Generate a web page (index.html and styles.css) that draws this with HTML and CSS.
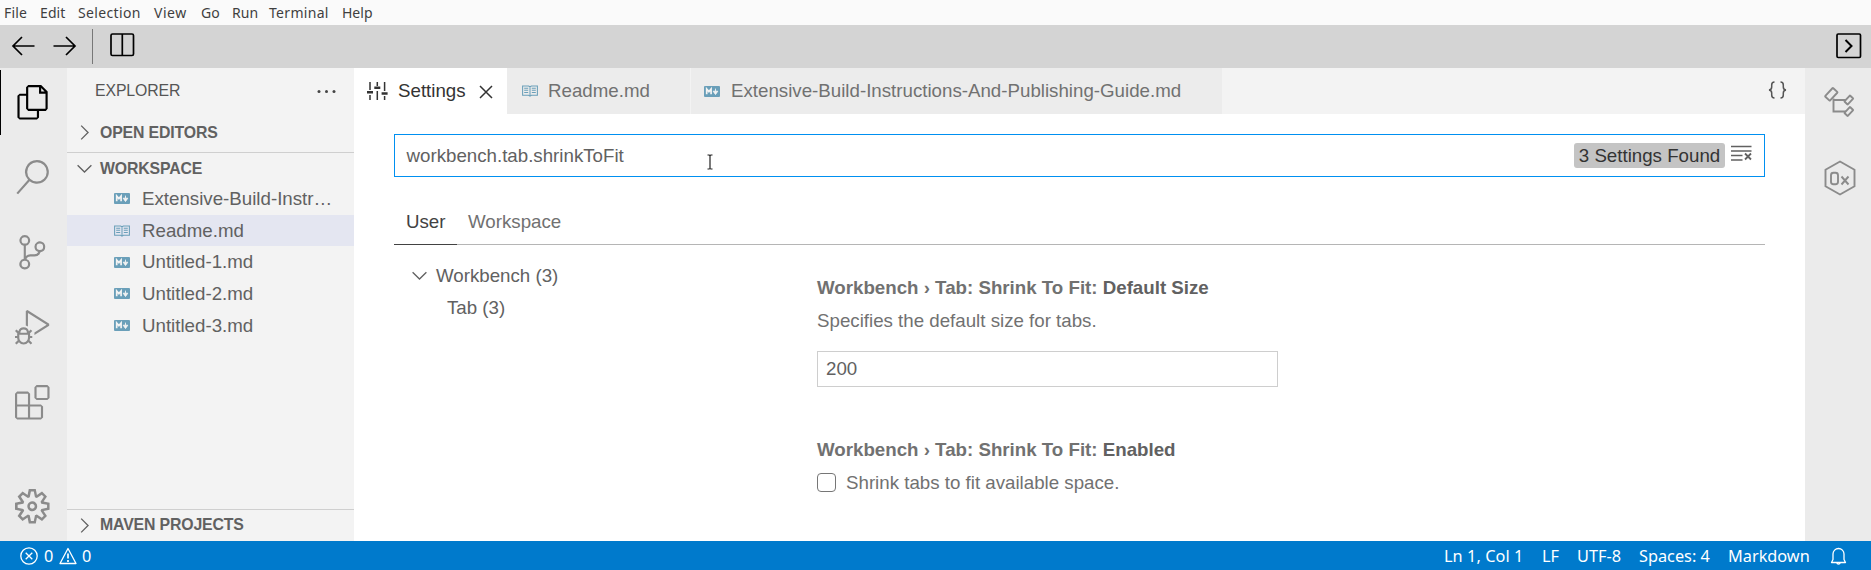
FILE: index.html
```html
<!DOCTYPE html>
<html lang="en">
<head>
<meta charset="utf-8">
<title>Settings</title>
<link rel="stylesheet" href="styles.css">
</head>
<body>
<svg class="defs" width="0" height="0">
  <symbol id="md" viewBox="0 0 16 11"><rect width="16" height="11" rx="1"/><path d="M2.7 8.3V3l2.2 2.6L7.1 3v5.3" fill="none" stroke="#f3f3f3" stroke-width="1.7"/><path d="M11.5 2.6v3M9.2 5.2h4.6l-2.3 3.3z" fill="#f3f3f3" stroke="#f3f3f3" stroke-width=".9"/></symbol>
  <symbol id="book" viewBox="0 0 16 12"><path d="M.6 1h6L8 1.8 9.4 1h6v9.3h-6L8 11.2l-1.400-.9h-6zM8 1.800V11M2.200 3.300h4M2.200 5.300h4M2.200 7.500h4M9.800 3.300h4M9.800 5.300h4M9.800 7.500h4" fill="none" stroke="#6a9fb9" stroke-width="1.050"/></symbol>
  <symbol id="right" viewBox="0 0 16 16"><path d="M5.200 2.200 11 8l-5.800 5.800" fill="none" stroke="currentColor" stroke-width="1.1"/></symbol>
  <symbol id="down" viewBox="0 0 16 16"><path d="M2.200 5.200 8 11l5.800-5.800" fill="none" stroke="currentColor" stroke-width="1.1"/></symbol>
</svg>
<div class="window">
  <nav class="menubar">
    <span class="m-file">File</span><span class="m-edit">Edit</span><span class="m-selection">Selection</span><span class="m-view">View</span><span class="m-go">Go</span><span class="m-run">Run</span><span class="m-terminal">Terminal</span><span class="m-help">Help</span>
  </nav>
  <div class="toolbar">
    <svg class="arrow" width="24" height="20" viewBox="0 0 24 20"><path d="M23.500 10H2M11 1 2 10l9 9"/></svg>
    <svg class="arrow forward" width="24" height="20" viewBox="0 0 24 20"><path d="M.5 10h22M13 1l9 9-9 9"/></svg>
    <i class="divider"></i>
    <svg class="split" width="25" height="24" viewBox="0 0 25 24"><rect x="1" y="1" width="22.500" height="21.500" rx="1.500"/><path d="M12.300 1v21.500"/></svg>
    <svg class="panel-toggle" width="26" height="26" viewBox="0 0 26 26"><rect x="1" y="1" width="23.500" height="23.500" rx="1.200"/><path d="m9.500 7 6 6-6 6" stroke-width="2"/></svg>
  </div>
  <div class="workbench">
    <aside class="activity">
      <div class="act active"><svg viewBox="0 0 24 24"><path d="M17.5 0h-9L7 1.5V6H2.5L1 7.5v15.07L2.5 24h12.07L16 22.57V18h4.7l1.3-1.43V4.5L17.5 0zm0 2.120l2.380 2.380H17.500V2.120zm-3 20.380h-12v-15H7v9.070L8.500 18h6v4.500zm6-6h-12v-15H16V6h4.500v10.500z"/></svg></div>
      <div class="act"><svg viewBox="0 0 24 24"><path d="M15.250 0a8.250 8.250 0 0 0-6.180 13.720L1 22.880l1.120 1 8.050-9.120A8.251 8.251 0 1 0 15.250.01V0zm0 15a6.750 6.750 0 1 1 0-13.500 6.750 6.750 0 0 1 0 13.500z"/></svg></div>
      <div class="act"><svg viewBox="0 0 24 24"><path d="M21.007 8.222A3.738 3.738 0 0 0 15.045 5.200a3.737 3.737 0 0 0 1.156 6.583 2.988 2.988 0 0 1-2.668 1.670h-2.990a4.456 4.456 0 0 0-2.989 1.165V7.400a3.737 3.737 0 1 0-1.494 0v9.117a3.776 3.776 0 1 0 1.816.099 2.990 2.990 0 0 1 2.668-1.667h2.990a4.484 4.484 0 0 0 4.223-3.039 3.736 3.736 0 0 0 3.250-3.687zM4.565 3.738a2.242 2.242 0 1 1 4.484 0 2.242 2.242 0 0 1-4.484 0zm4.484 16.441a2.242 2.242 0 1 1-4.484 0 2.242 2.242 0 0 1 4.484 0zm8.221-9.715a2.242 2.242 0 1 1 0-4.485 2.242 2.242 0 0 1 0 4.485z"/></svg></div>
      <div class="act"><svg viewBox="0 0 24 24"><path d="M10.940 13.500l-1.320 1.320a3.730 3.730 0 0 0-7.240 0L1.060 13.500 0 14.560l1.720 1.720-.22.22V18H0v1.500h1.500v.08c.077.489.214.966.41 1.420L0 22.940 1.060 24l1.650-1.650A4.308 4.308 0 0 0 6 24a4.310 4.310 0 0 0 3.290-1.650L10.940 24 12 22.940 10.090 21c.198-.464.336-.951.41-1.450v-.1H12V18h-1.500v-1.500l-.22-.22L12 14.560l-1.060-1.060zM6 13.500a2.250 2.250 0 0 1 2.250 2.250h-4.500A2.250 2.250 0 0 1 6 13.500zm3 6a3.330 3.330 0 0 1-3 3 3.330 3.330 0 0 1-3-3v-2.250h6v2.250zm14.760-9.900v1.260L13.500 17.370V15.600l8.500-5.370L9 2v9.460a5.070 5.070 0 0 0-1.500-.72V.63L8.640 0l15.120 9.600z"/></svg></div>
      <div class="act"><svg viewBox="0 0 24 24"><path d="M13.500 1.500L15 0h7.500L24 1.500V9l-1.500 1.500H15L13.500 9V1.500zm1.500 0V9h7.500V1.500H15zM0 15V6l1.500-1.500H9L10.500 6v7.500H18l1.500 1.500v7.500L18 24H1.500L0 22.500V15zm9-1.500V6H1.500v7.500H9zM9 15H1.500v7.500H9V15zm1.500 7.500H18V15h-7.500v7.500z"/></svg></div>
      <div class="act gear"><svg viewBox="0 0 24 24"><path d="M19.850 8.750l4.150.83v4.840l-4.150.83 2.350 3.520-3.430 3.430-3.520-2.350-.83 4.150H9.580l-.83-4.150-3.520 2.350-3.430-3.430 2.350-3.520L0 14.420V9.580l4.150-.83L1.800 5.230 5.230 1.800l3.520 2.350L9.580 0h4.840l.83 4.150 3.520-2.350 3.430 3.430-2.350 3.520zm-1.570 5.070l4-.81v-2l-4-.81-.54-1.300 2.290-3.430-1.430-1.430-3.430 2.290-1.300-.54-.81-4h-2l-.81 4-1.300.54-3.430-2.290-1.430 1.430L6.380 8.900l-.54 1.300-4 .81v2l4 .81.54 1.300-2.290 3.430 1.430 1.430 3.430-2.290 1.300.54.81 4h2l.81-4 1.300-.54 3.430 2.290 1.430-1.430-2.290-3.430.54-1.300zm-8.186-4.672A3.430 3.430 0 0 1 12 8.570 3.440 3.440 0 0 1 15.430 12a3.430 3.430 0 1 1-5.336-2.852zm.956 4.274c.281.188.612.288.95.288A1.700 1.700 0 0 0 13.710 12a1.710 1.710 0 1 0-2.660 1.422z"/></svg></div>
    </aside>

    <aside class="sidebar">
      <header class="side-title"><span>EXPLORER</span><svg width="19" height="5" viewBox="0 0 19 5"><circle cx="2" cy="2.500" r="1.500"/><circle cx="9.500" cy="2.500" r="1.500"/><circle cx="17" cy="2.500" r="1.500"/></svg></header>
      <div class="section open-editors"><svg class="chev"><use href="#right"/></svg><span>OPEN EDITORS</span></div>
      <div class="section ruled"><svg class="chev"><use href="#down"/></svg><span>WORKSPACE</span></div>
      <div class="file"><svg class="md"><use href="#md"/></svg><span>Extensive-Build-Instr…</span></div>
      <div class="file selected"><svg class="book"><use href="#book"/></svg><span>Readme.md</span></div>
      <div class="file"><svg class="md"><use href="#md"/></svg><span>Untitled-1.md</span></div>
      <div class="file"><svg class="md"><use href="#md"/></svg><span>Untitled-2.md</span></div>
      <div class="file"><svg class="md"><use href="#md"/></svg><span>Untitled-3.md</span></div>
      <div class="section ruled maven"><svg class="chev"><use href="#right"/></svg><span>MAVEN PROJECTS</span></div>
    </aside>

    <main class="editor">
      <div class="tabs">
        <div class="tab t-settings"><svg class="sliders" width="21" height="18" viewBox="0 0 21 18"><path d="M3 0v8M3 13v5M10.300 0v4M10.300 9v9M17.600 0v9M17.600 14v4" stroke-width="1.500"/><path d="M0 10.300h6M7.300 5.800h6M14.600 11.500h6" stroke-width="2.400"/></svg><span>Settings</span><svg class="close" width="14" height="14" viewBox="0 0 14 14"><path d="m1 1 12 12M13 1 1 13"/></svg></div>
        <div class="tab t-readme"><svg class="book"><use href="#book"/></svg><span>Readme.md</span></div>
        <div class="tab t-guide"><svg class="md"><use href="#md"/></svg><span>Extensive-Build-Instructions-And-Publishing-Guide.md</span></div>
        <svg class="json" width="19" height="18" viewBox="0 0 19 18"><path d="M6.500 1C4 1 3.700 2 3.700 4v2c0 2-.7 2.800-2.700 3 2 .2 2.700 1 2.700 3v2c0 2 .3 3 2.800 3M12.500 1C15 1 15.300 2 15.300 4v2c0 2 .7 2.800 2.700 3-2 .2-2.700 1-2.700 3v2c0 2-.3 3-2.800 3"/></svg>
      </div>
      <div class="settings">
        <div class="search"><span class="query">workbench.tab.shrinkToFit</span><span class="count">3 Settings Found</span><svg class="clear" width="21" height="16" viewBox="0 0 21 16"><path d="M0 1.500h20.500M0 6h20.500M0 10.500h11.500M0 15h11.500" stroke-width="1.400"/><path d="m14 8.500 6 6M20 8.500l-6 6" stroke-width="1.800"/></svg>
          <svg class="ibeam" width="10" height="18" viewBox="0 0 10 18"><path d="M2.500 2H4l1 .6L6 2h1.500M5 2.600v12.800M2.500 16H4l1-.6 1 .6h1.500"/></svg>
        </div>
        <div class="scopes"><span class="scope current">User</span><span class="scope">Workspace</span></div>
        <div class="body">
          <div class="tree">
            <div class="branch"><svg class="chev"><use href="#down"/></svg><span>Workbench (3)</span></div>
            <div class="leaf">Tab (3)</div>
          </div>
          <div class="items">
            <h2>Workbench › Tab: Shrink To Fit: <b>Default Size</b></h2>
            <p>Specifies the default size for tabs.</p>
            <div class="number">200</div>
            <h2 class="second">Workbench › Tab: Shrink To Fit: <b>Enabled</b></h2>
            <div class="check"><i class="box"></i><p>Shrink tabs to fit available space.</p></div>
          </div>
        </div>
      </div>
    </main>

    <aside class="rightbar">
      <svg class="hierarchy" width="32" height="32" viewBox="0 0 32 32"><rect x="-5.800" y="-3.300" width="11.600" height="6.600" rx=".6" transform="translate(8.300 8.300) rotate(-47)"/><rect x="-4.100" y="-2.300" width="8.200" height="4.600" rx=".5" transform="translate(25.800 14) rotate(-47)"/><rect x="-4.100" y="-2.300" width="8.200" height="4.600" rx=".5" transform="translate(25.800 25.500) rotate(-47)"/><path d="M10.500 12.500v13h12.500M10.500 14h12.500"/></svg>
      <svg class="hex" width="34" height="36" viewBox="0 0 34 36"><path d="M17 1.500 31.500 9.800v16.400L17 34.500 2.500 26.200V9.800z"/><rect x="8" y="12.700" width="7" height="11.600" rx="2.500"/><path d="m18.500 16.500 7 8M25.500 16.500l-7 8"/></svg>
    </aside>
  </div>

  <footer class="status">
    <svg class="err" width="18" height="18" viewBox="0 0 18 18"><circle cx="9" cy="9" r="8.200"/><path d="m5.700 5.700 6.600 6.600M12.300 5.700l-6.600 6.600"/></svg><span class="s-err">0</span>
    <svg class="warn" width="18" height="18" viewBox="0 0 18 18"><path d="M9 1.500 17 16.500H1z" stroke-linejoin="round"/><path d="M9 6.500v5M9 13v2" stroke-width="1.700"/></svg><span class="s-warn">0</span>
    <span class="s-pos">Ln 1, Col 1</span><span class="s-eol">LF</span><span class="s-enc">UTF-8</span><span class="s-indent">Spaces: 4</span><span class="s-lang">Markdown</span>
    <svg class="bell" width="17" height="19" viewBox="0 0 17 19"><path d="M1.500 15.500 3 12.500V7a5.500 5.500 0 0 1 11 0v5.500l1.500 3zM6.700 15.800a1.900 1.900 0 0 0 3.600 0" stroke-linejoin="round"/></svg>
  </footer>
</div>
</body>
</html>
```

FILE: styles.css
```css
* { box-sizing: border-box; }
body { margin: 0; background: #fff; font: 18.72px "Liberation Sans", Arial, sans-serif; color: #616161; overflow: hidden; }
svg { display: block; flex: none; }
.defs { position: absolute; }
.window { width: 1871px; height: 570px; display: grid; grid-template-rows: 25px 43px 473px 29px; }

.menubar { display: flex; padding-left: 4px; background: #fafafa; color: #3f3f3f; font: 14px/25px "Noto Sans", sans-serif; white-space: nowrap; }
.m-file { width: 36px; letter-spacing: .15px; }
.m-edit { width: 38px; letter-spacing: .1px; }
.m-selection { width: 76px; letter-spacing: .35px; }
.m-view { width: 47px; letter-spacing: .5px; }
.m-go { width: 31px; }
.m-run { width: 37px; letter-spacing: .1px; }
.m-terminal { width: 73px; letter-spacing: .3px; }

.toolbar { display: flex; align-items: flex-start; background: #d4d4d4; padding: 4px 9px 0 11px; fill: none; stroke: #000; stroke-width: 1.7; }
.arrow { margin-top: 7px; }
.forward { margin-left: 18px; }
.divider { width: 1px; height: 35px; margin-left: 15px; background: #777; }
.split { margin: 4px 0 0 17px; }
.panel-toggle { margin: 4px 0 0 auto; }

.workbench { display: grid; grid-template-columns: 67px 287px 1451px 66px; min-height: 0; }
.activity { display: flex; flex-direction: column; gap: 10px; padding: 2px 0; background: #ebebeb; fill: #8b8b8b; }
.act { height: 65px; display: flex; align-items: center; padding-left: 15.3px; }
.act svg { width: 34.56px; height: 34.56px; }
.act.active { border-left: 1px solid #000; padding-left: 15px; fill: #000; }
.gear { margin-top: auto; }

.sidebar { display: flex; flex-direction: column; background: #f3f3f3; min-width: 0; }
.side-title { height: 47px; display: flex; align-items: center; justify-content: space-between; padding: 0 18px 1px 28px; font-size: 15.84px; color: #555; fill: #444; letter-spacing: -.1px; }
.section { display: flex; align-items: center; height: 31px; padding-left: 8px; font-size: 15.84px; font-weight: bold; letter-spacing: -.14px; }
.chev { width: 19px; height: 19px; }
.section .chev { margin-right: 6px; }
.open-editors { height: 37px; padding-bottom: 2px; }
.ruled { border-top: 1px solid #cfcfcf; padding-top: 1px; }
.file { height: 31.68px; display: flex; align-items: center; padding: 0 10px 0 47px; white-space: nowrap; }
.md { width: 16px; height: 11px; fill: #6a9fb9; margin-right: 12px; }
.book { width: 16px; height: 12px; margin-right: 12px; }
.selected { background: #e4e6f1; }
.maven { margin-top: auto; height: 32px; padding: 0 0 1px 8px; }

.tabs { display: flex; height: 46px; background: #f3f3f3; }
.tab { display: flex; align-items: center; background: #ececec; color: #717171; white-space: nowrap; }
.t-settings { width: 153px; padding-left: 13px; background: #fff; color: #333; }
.sliders { stroke: #333; margin-right: 10px; }
.close { margin: 2px 0 0 13px; stroke: #333; stroke-width: 1.5; }
.t-readme { width: 184px; padding-left: 15px; border-right: 1px solid #f3f3f3; }
.t-readme .book { margin-right: 10px; }
.t-guide { width: 531px; padding-left: 13px; }
.t-guide .md { margin-right: 11px; }
.json { margin: 13px 18px 0 auto; fill: none; stroke: #555; stroke-width: 1.5; }

.settings { padding: 20px 40px 0; }
.search { position: relative; height: 43px; display: flex; align-items: center; padding: 0 12px 0 11.5px; border: 1px solid #0090f1; }
.count { margin-left: auto; width: 151px; height: 25px; line-height: 25px; text-align: center; background: #c4c4c4; color: #333; border-radius: 3px; }
.clear { margin: -5px 0 0 6px; stroke: #616161; }
.ibeam { position: absolute; left: 310px; top: 18px; fill: none; stroke: #222; stroke-width: 1.2; }
.scopes { display: flex; height: 68px; padding-top: 23px; border-bottom: 1px solid #b5b5b5; color: #717171; line-height: 44px; }
.scope { height: 45px; padding: 0 11px; }
.current { width: 63px; padding-left: 12px; padding-right: 0; color: #424242; border-bottom: 1px solid #424242; }
.body { display: grid; grid-template-columns: 423px 1fr; }
.tree { padding: 15px 0 0 16px; line-height: 31.68px; }
.branch { display: flex; align-items: center; }
.branch .chev { margin-right: 7px; }
.leaf { padding-left: 37px; }
.items { padding-top: 29px; }
h2 { margin: 0; font-size: 18.72px; line-height: 27px; color: #717171; white-space: pre; }
h2 b { color: #616161; }
p { margin: 6px 0 0; line-height: 27px; color: #717171; }
.number { width: 461px; height: 36px; margin-top: 17px; padding-left: 8px; border: 1px solid #cecece; line-height: 34px; }
.second { margin-top: 49px; }
.check { display: flex; }
.box { width: 19px; height: 19px; margin: 10px 10px 0 0; border: 1px solid #767676; border-radius: 4px; }

.rightbar { background: #ebebeb; fill: none; stroke: #8b8b8b; stroke-width: 1.9; padding-left: 18px; }
.hierarchy { margin-top: 18px; }
.hex { margin-top: 42px; }

.status { display: flex; align-items: center; background: #007acc; color: #fff; font: 16.3px/28px "Noto Sans", sans-serif; white-space: nowrap; padding: 1px 0 0 20px; }
.status svg { fill: none; stroke: #fff; stroke-width: 1.3; }
.s-err { width: 15px; margin-left: 6px; }
.s-warn { margin-left: 5px; width: 1362px; }
.s-pos { width: 98px; letter-spacing: .08px; }
.s-eol { width: 35px; }
.s-enc { width: 62px; }
.s-indent { width: 89px; }
.s-lang { width: 102px; }
```
